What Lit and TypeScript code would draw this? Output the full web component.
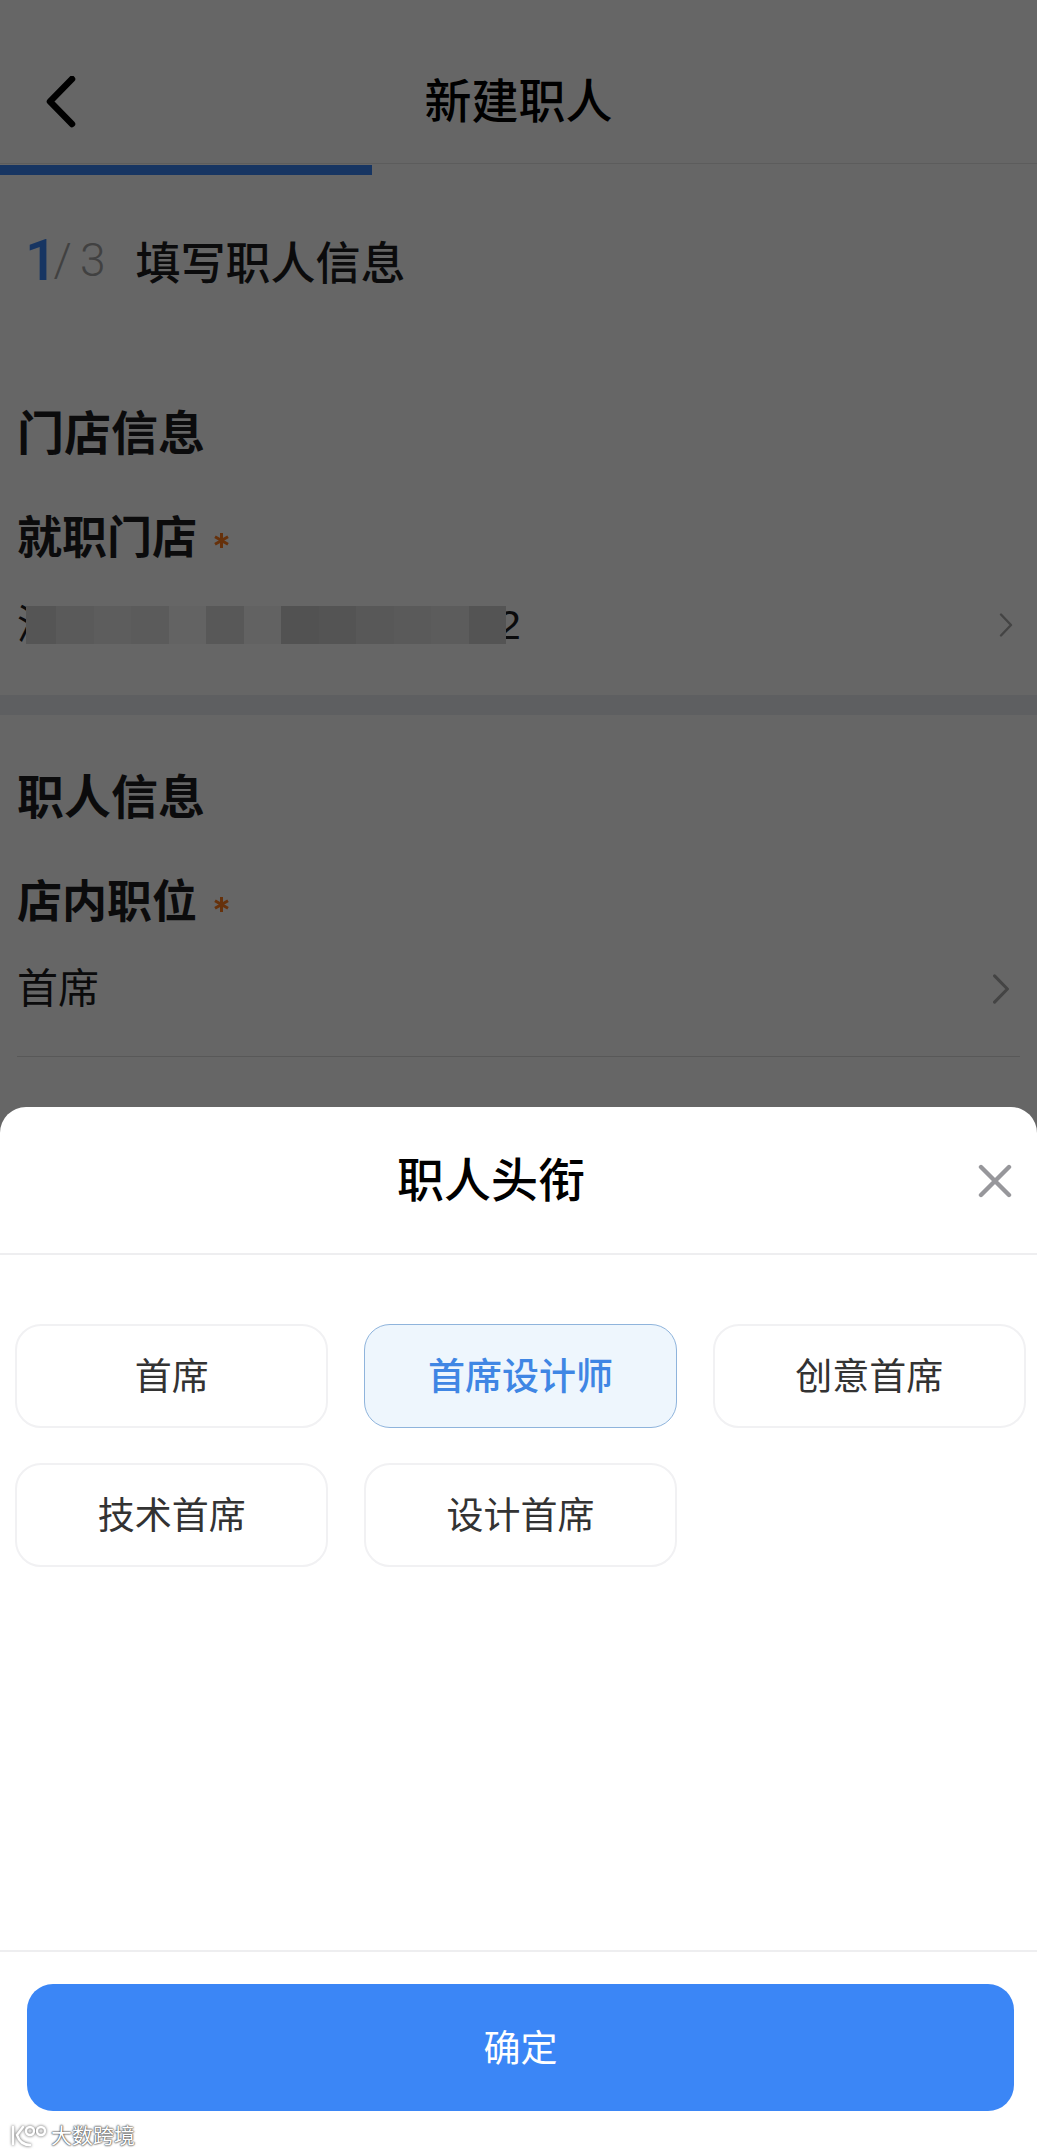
import { LitElement, css, html, svg } from 'lit';
import { customElement, state } from 'lit/decorators.js';

// pixelated redaction over the store name, grey value of each tile after dimming
const MOSAIC = [85, 90, 93, 91, 99, 88, 98, 82, 84, 88, 90, 92, 84];
const TITLES = ['首席', '首席设计师', '创意首席', '技术首席', '设计首席'];

@customElement('app-root')
export class AppRoot extends LitElement {
  static styles = css`
    :host {
      display: block;
      position: relative;
      width: 1037px;
      height: 2156px;
      overflow: hidden;
      background: #fff;
      color: #1c1c1e;
      font-family: 'Liberation Sans', 'Noto Sans CJK SC', sans-serif;
    }

    .page {
      isolation: isolate;
    }

    .nav {
      display: grid;
      grid-template-columns: 1fr auto 1fr;
      align-items: center;
      box-sizing: border-box;
      height: 164px;
      padding: 41px 46px 0;
      border-bottom: 1px solid #e6e6e6;
    }

    .nav h1 {
      margin: 0;
      font-size: 47px;
      font-weight: 500;
      line-height: 60px;
      color: #000;
    }

    .back {
      display: block;
      width: 32px;
      height: 52px;
    }

    .progress {
      height: 10px;
      margin-top: 1px;
      background: #3b86f6;
    }

    .step {
      display: flex;
      align-items: center;
      height: 170px;
      padding-left: 25px;
      font-size: 45px;
      font-weight: 500;
    }

    .step .now {
      font-family: Roboto, sans-serif;
      font-size: 57px;
      font-weight: 500;
      color: #3b86f6;
    }

    .step .rest {
      margin: 0 30px 0 -4px;
      font-family: Roboto, sans-serif;
      font-size: 46px;
      font-weight: 300;
      word-spacing: -3px;
      color: #a3a3a3;
    }

    .section {
      padding: 59px 17px 40px;
    }

    .section + .section {
      padding-top: 53px;
      padding-bottom: 0;
      border-top: 20px solid #ecedf3;
    }

    h2 {
      margin: 0;
      font-size: 47px;
      font-weight: 700;
      line-height: 60px;
    }

    .label {
      display: flex;
      align-items: center;
      margin-top: 45px;
      font-size: 45px;
      font-weight: 700;
      line-height: 60px;
    }

    .star {
      width: 17px;
      height: 17px;
      margin: 3px 0 0 16px;
    }

    .value {
      display: flex;
      align-items: center;
      margin-top: 26px;
      font-size: 41px;
      line-height: 60px;
    }

    .value .chevron {
      margin-left: auto;
    }

    .mosaic {
      position: relative;
      z-index: 1;
      display: flex;
      height: 38px;
      margin: 0 -8px 0 -32px;
    }

    .mosaic span {
      width: 37.5px;
    }

    .mosaic span:first-child {
      width: 30px;
    }

    .chevron {
      display: block;
      width: 14px;
      height: 24px;
      margin-right: 7px;
    }

    .chevron.large {
      width: 18px;
      height: 30px;
      margin-right: 10px;
    }

    .rule {
      height: 1px;
      margin-top: 37px;
      background: #ddd;
    }

    .scrim {
      position: absolute;
      inset: 0;
      background: rgba(0, 0, 0, 0.6);
    }

    .sheet {
      position: absolute;
      left: 0;
      right: 0;
      bottom: 0;
      display: flex;
      flex-direction: column;
      height: 1049px;
      border-radius: 26px 26px 0 0;
      background: #fff;
    }

    .sheet-head {
      display: grid;
      grid-template-columns: 1fr auto 1fr;
      align-items: center;
      box-sizing: border-box;
      height: 148px;
      padding: 2px 55px 0 0;
      border-bottom: 2px solid #eeeef0;
    }

    .sheet-head h3 {
      margin: 0;
      font-size: 47px;
      font-weight: 500;
      line-height: 60px;
      color: #000;
    }

    .close {
      display: block;
      width: 34px;
      height: 34px;
      margin-right: -30px;
      justify-self: end;
    }

    .chips {
      flex: 1;
      display: grid;
      grid-template-columns: repeat(3, 1fr);
      grid-auto-rows: 104px;
      align-content: start;
      gap: 35px 35.5px;
      padding: 69px 11px 0 15px;
    }

    .chip {
      display: flex;
      align-items: center;
      justify-content: center;
      box-sizing: border-box;
      padding-bottom: 4px;
      border: 2px solid #f1f1f3;
      border-radius: 26px;
      font-size: 37px;
      color: #333;
    }

    .chip.on {
      border: 1.5px solid #8fb4dc;
      background: #eef6fd;
      color: #3f86e4;
      font-weight: 500;
    }

    .foot {
      box-sizing: border-box;
      height: 206px;
      padding: 32px 23px 0 27px;
      border-top: 2px solid #eeeef0;
    }

    .confirm {
      display: flex;
      align-items: center;
      justify-content: center;
      box-sizing: border-box;
      height: 127px;
      padding-bottom: 3px;
      border-radius: 26px;
      background: #3b86f6;
      color: #fff;
      font-size: 37px;
    }

    .mark {
      position: absolute;
      left: 10px;
      bottom: 8px;
      display: flex;
      align-items: center;
      gap: 3px;
      color: #fff;
      font-size: 21px;
      line-height: 24px;
      text-shadow: 0 0 2px #555, 0 0 2px #555, 0 0 1px #555;
    }

    .mark svg {
      display: block;
      width: 38px;
      height: 24px;
      filter: drop-shadow(0 0 1.5px #555);
    }
  `;

  @state() selected = 1;

  chevron(large = false) {
    return html`<svg class="chevron ${large ? 'large' : ''}" viewBox="0 0 14 24" fill="none" preserveAspectRatio="none">
      <path d="M2 1.5 12 12 2 22.5" stroke="#aaa" stroke-width="2.4" stroke-linecap="round" stroke-linejoin="round" />
    </svg>`;
  }

  star() {
    return svg`<svg class="star" viewBox="0 0 17 17">
      <path d="M8.5 1v15M2 4.7l13 7.6M15 4.7 2 12.3" stroke="#ff7a1c" stroke-width="3" />
    </svg>`;
  }

  render() {
    return html`
      <div class="page">
        <div class="nav">
          <svg class="back" viewBox="0 0 32 52" fill="none">
            <path d="M26 3 4 25.5 26 48" stroke="#000" stroke-width="6.5" stroke-linecap="round" stroke-linejoin="round" />
          </svg>
          <h1>新建职人</h1>
        </div>
        <div class="progress" style="width: ${(372 / 1037) * 100}%"></div>
        <div class="step">
          <span class="now">1</span>
          <span class="rest">/ 3</span>
          <span>填写职人信息</span>
        </div>

        <section class="section">
          <h2>门店信息</h2>
          <div class="label">就职门店${this.star()}</div>
          <div class="value">
            <span>深</span>
            <div class="mosaic">
              ${MOSAIC.map((v) => html`<span style="background: rgb(${v / 0.4}, ${v / 0.4}, ${v / 0.4})"></span>`)}
            </div>
            <span>2</span>
            ${this.chevron()}
          </div>
        </section>

        <section class="section">
          <h2>职人信息</h2>
          <div class="label">店内职位${this.star()}</div>
          <div class="value">
            <span>首席</span>
            ${this.chevron(true)}
          </div>
          <div class="rule"></div>
        </section>
      </div>

      <div class="scrim"></div>

      <div class="sheet">
        <div class="sheet-head">
          <span></span>
          <h3>职人头衔</h3>
          <svg class="close" viewBox="0 0 34 34" fill="none">
            <path d="M3 3 31 31M31 3 3 31" stroke="#97979b" stroke-width="4.4" stroke-linecap="round" />
          </svg>
        </div>
        <div class="chips">
          ${TITLES.map(
            (t, i) => html`<div class="chip ${i === this.selected ? 'on' : ''}" @click=${() => (this.selected = i)}>${t}</div>`
          )}
        </div>
        <div class="foot">
          <div class="confirm">确定</div>
        </div>
      </div>

      <div class="mark">
        <svg viewBox="0 0 38 24" fill="none" stroke="#fff" stroke-width="2.4" stroke-linecap="round">
          <path d="M3 3v17M13 3 7 11c2 6 6 10 13 10" />
          <circle cx="20" cy="7" r="4" />
          <circle cx="31" cy="7" r="4" />
        </svg>
        <span>大数跨境</span>
      </div>
    `;
  }
}
